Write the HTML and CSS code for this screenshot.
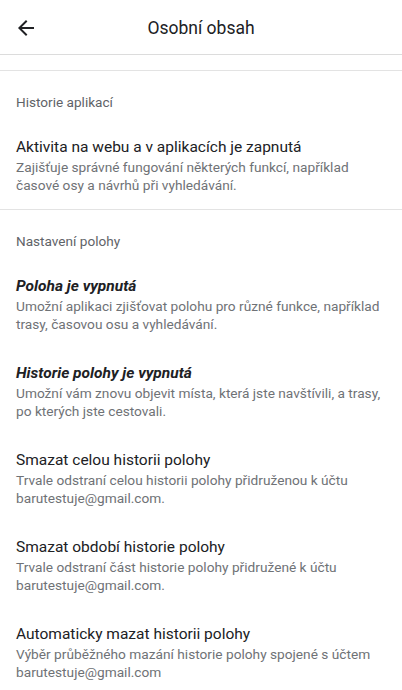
FILE: index.html
```html
<!DOCTYPE html>
<html lang="cs">
<head>
    <meta charset="UTF-8">
    <meta name="viewport" content="width=device-width, initial-scale=1.0">
    <title>Osobní obsah</title>
    <link rel="stylesheet" href="styles.css">
</head>
<body>
    <header class="topbar">
        <span class="back">
            <svg width="24" height="24" viewBox="0 0 24 24"><path d="M20 11H7.83l5.59-5.59L12 4l-8 8 8 8 1.41-1.41L7.83 13H20v-2z" fill="#202124"/></svg>
        </span>
        <h1 class="topbar-title">Osobní obsah</h1>
    </header>
    <div class="band"></div>

    <section class="section">
        <h2 class="section-title">Historie aplikací</h2>
        <div class="item">
            <div class="item-title">Aktivita na webu a v aplikacích je zapnutá</div>
            <div class="item-desc">Zajišťuje správné fungování některých funkcí, například časové osy a návrhů při vyhledávání.</div>
        </div>
    </section>

    <section class="section last">
        <h2 class="section-title">Nastavení polohy</h2>
        <div class="item">
            <div class="item-title strong">Poloha je vypnutá</div>
            <div class="item-desc">Umožní aplikaci zjišťovat polohu pro různé funkce, například trasy, časovou osu a vyhledávání.</div>
        </div>
        <div class="item">
            <div class="item-title strong">Historie polohy je vypnutá</div>
            <div class="item-desc">Umožní vám znovu objevit místa, která jste navštívili, a trasy, po kterých jste cestovali.</div>
        </div>
        <div class="item">
            <div class="item-title">Smazat celou historii polohy</div>
            <div class="item-desc">Trvale odstraní celou historii polohy přidruženou k účtu barutestuje@gmail.com.</div>
        </div>
        <div class="item">
            <div class="item-title">Smazat období historie polohy</div>
            <div class="item-desc">Trvale odstraní část historie polohy přidružené k účtu barutestuje@gmail.com.</div>
        </div>
        <div class="item">
            <div class="item-title">Automaticky mazat historii polohy</div>
            <div class="item-desc">Výběr průběžného mazání historie polohy spojené s účtem barutestuje@gmail.com</div>
        </div>
    </section>
</body>
</html>
```

FILE: styles.css
```css
body {
    font-family: Roboto, "Liberation Sans", sans-serif;
    margin: 0;
    padding: 0;
    background-color: #fff;
    color: #202124;
    overflow: hidden;
}
.topbar {
    display: flex;
    align-items: center;
    height: 54px;
    border-bottom: 1px solid #dcdcdc;
    position: relative;
}
.back {
    display: flex;
    margin-left: 14px;
    margin-top: 1px;
}
.topbar-title {
    position: absolute;
    left: 0;
    right: 0;
    top: 17px;
    margin: 0;
    text-align: center;
    font-size: 17.5px;
    line-height: 22px;
    font-weight: 400;
    pointer-events: none;
}
.band {
    height: 15px;
    border-bottom: 1px solid #e3e3e3;
}
.section {
    border-bottom: 1px solid #e3e3e3;
}
.section.last {
    border-bottom: none;
}
.section-title {
    margin: 0;
    padding: 22px 16px 11px;
    font-size: 13.6px;
    line-height: 18px;
    font-weight: 400;
    color: #5f6368;
}
.item {
    padding: 15px 16px;
}
.item-title {
    font-size: 15.5px;
    line-height: 20px;
    color: #202124;
}
.item-title.strong {
    font-weight: 700;
    font-style: italic;
}
.item-desc {
    margin-top: 1px;
    font-size: 13.7px;
    line-height: 18px;
    color: #6f7276;
}
```
